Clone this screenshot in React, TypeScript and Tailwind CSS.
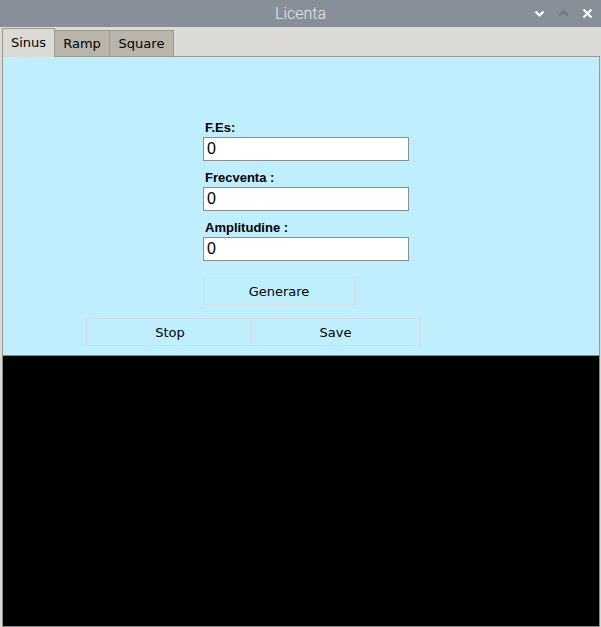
import React from "react";

const Field = ({ label }: { label: string }) => (
  <div className="flex flex-col" style={{ fontFamily: '"Liberation Sans", Arial, sans-serif' }}>
    <div className="h-[26px] pt-[9px] pl-[2px] text-[13px] leading-[16px] font-bold text-black">{label}</div>
    <div className="h-[24px] w-[206px] border border-[#8d8d8d] bg-white pl-[3px] text-[16px] leading-[22px] text-black">0</div>
  </div>
);

const App = () => {
  return (
    <div className="flex h-[627px] w-[601px] flex-col overflow-hidden bg-[#dcdad5]" style={{ fontFamily: '"DejaVu Sans", sans-serif' }}>
      {/* title bar */}
      <div className="relative flex h-[27px] items-center justify-center bg-[#878f99]">
        <span className="text-[16px] font-light text-[#e6e9ec]" style={{ fontFamily: "Roboto, sans-serif" }}>Licenta</span>
        <div className="absolute right-[8px] top-[8px] flex items-center gap-[13px]">
          <svg width="11" height="11" viewBox="0 0 11 11">
            <path d="M1.5 3.5 L5.5 7.5 L9.5 3.5" stroke="#ffffff" strokeWidth="2.2" fill="none" />
          </svg>
          <svg width="11" height="11" viewBox="0 0 11 11">
            <path d="M1.5 7.5 L5.5 3.5 L9.5 7.5" stroke="#6f767e" strokeWidth="2.2" fill="none" />
          </svg>
          <svg width="11" height="11" viewBox="0 0 11 11">
            <path d="M1.5 1.5 L9.5 9.5 M9.5 1.5 L1.5 9.5" stroke="#ffffff" strokeWidth="2.2" fill="none" />
          </svg>
        </div>
      </div>

      {/* tabs */}
      <div className="flex h-[29px] items-end pl-[2px]">
        <div className="relative z-10 -mb-px flex h-[29px] w-[53px] items-center justify-center border border-b-0 border-[#9e9a91] bg-[#dcdad5] text-[13px] text-black">
          Sinus
        </div>
        <div className="flex h-[26px] w-[55px] items-center justify-center border border-b-0 border-l-0 border-[#9e9a91] bg-[#bab5ab] text-[13px] text-black">
          Ramp
        </div>
        <div className="flex h-[26px] w-[64px] items-center justify-center border border-b-0 border-l-0 border-[#9e9a91] bg-[#bab5ab] text-[13px] text-black">
          Square
        </div>
      </div>

      {/* pane */}
      <div className="ml-[2px] mr-[1px] border-x border-t border-[#9e9a91] bg-[#dcdad5]">
        <div className="flex h-[298px] flex-col bg-[#bfefff] pt-[54px]">
          <div className="ml-[200px] flex flex-col">
            <Field label="F.Es:" />
            <Field label="Frecventa :" />
            <Field label="Amplitudine :" />
          </div>
          <div className="ml-[200px] mt-[16px] flex h-[28px] w-[152px] items-center justify-center border border-[#d6dde0] pt-[1px] text-[13px] text-black">
            Generare
          </div>
          <div className="ml-[83px] mt-[13px] flex h-[28px] w-[335px]">
            <div className="flex w-[165px] items-center justify-center border border-[#d6dde0] pt-[1px] pl-[3px] text-[13px] text-black">Stop</div>
            <div className="flex flex-1 items-center justify-center border border-l-0 border-[#d6dde0] pt-[1px] text-[13px] text-black">Save</div>
          </div>
        </div>
      </div>

      {/* canvas */}
      <div className="ml-[2px] mr-[1px] flex-1 border border-[#8a8a8a] bg-black" />
    </div>
  );
};

export default App;
